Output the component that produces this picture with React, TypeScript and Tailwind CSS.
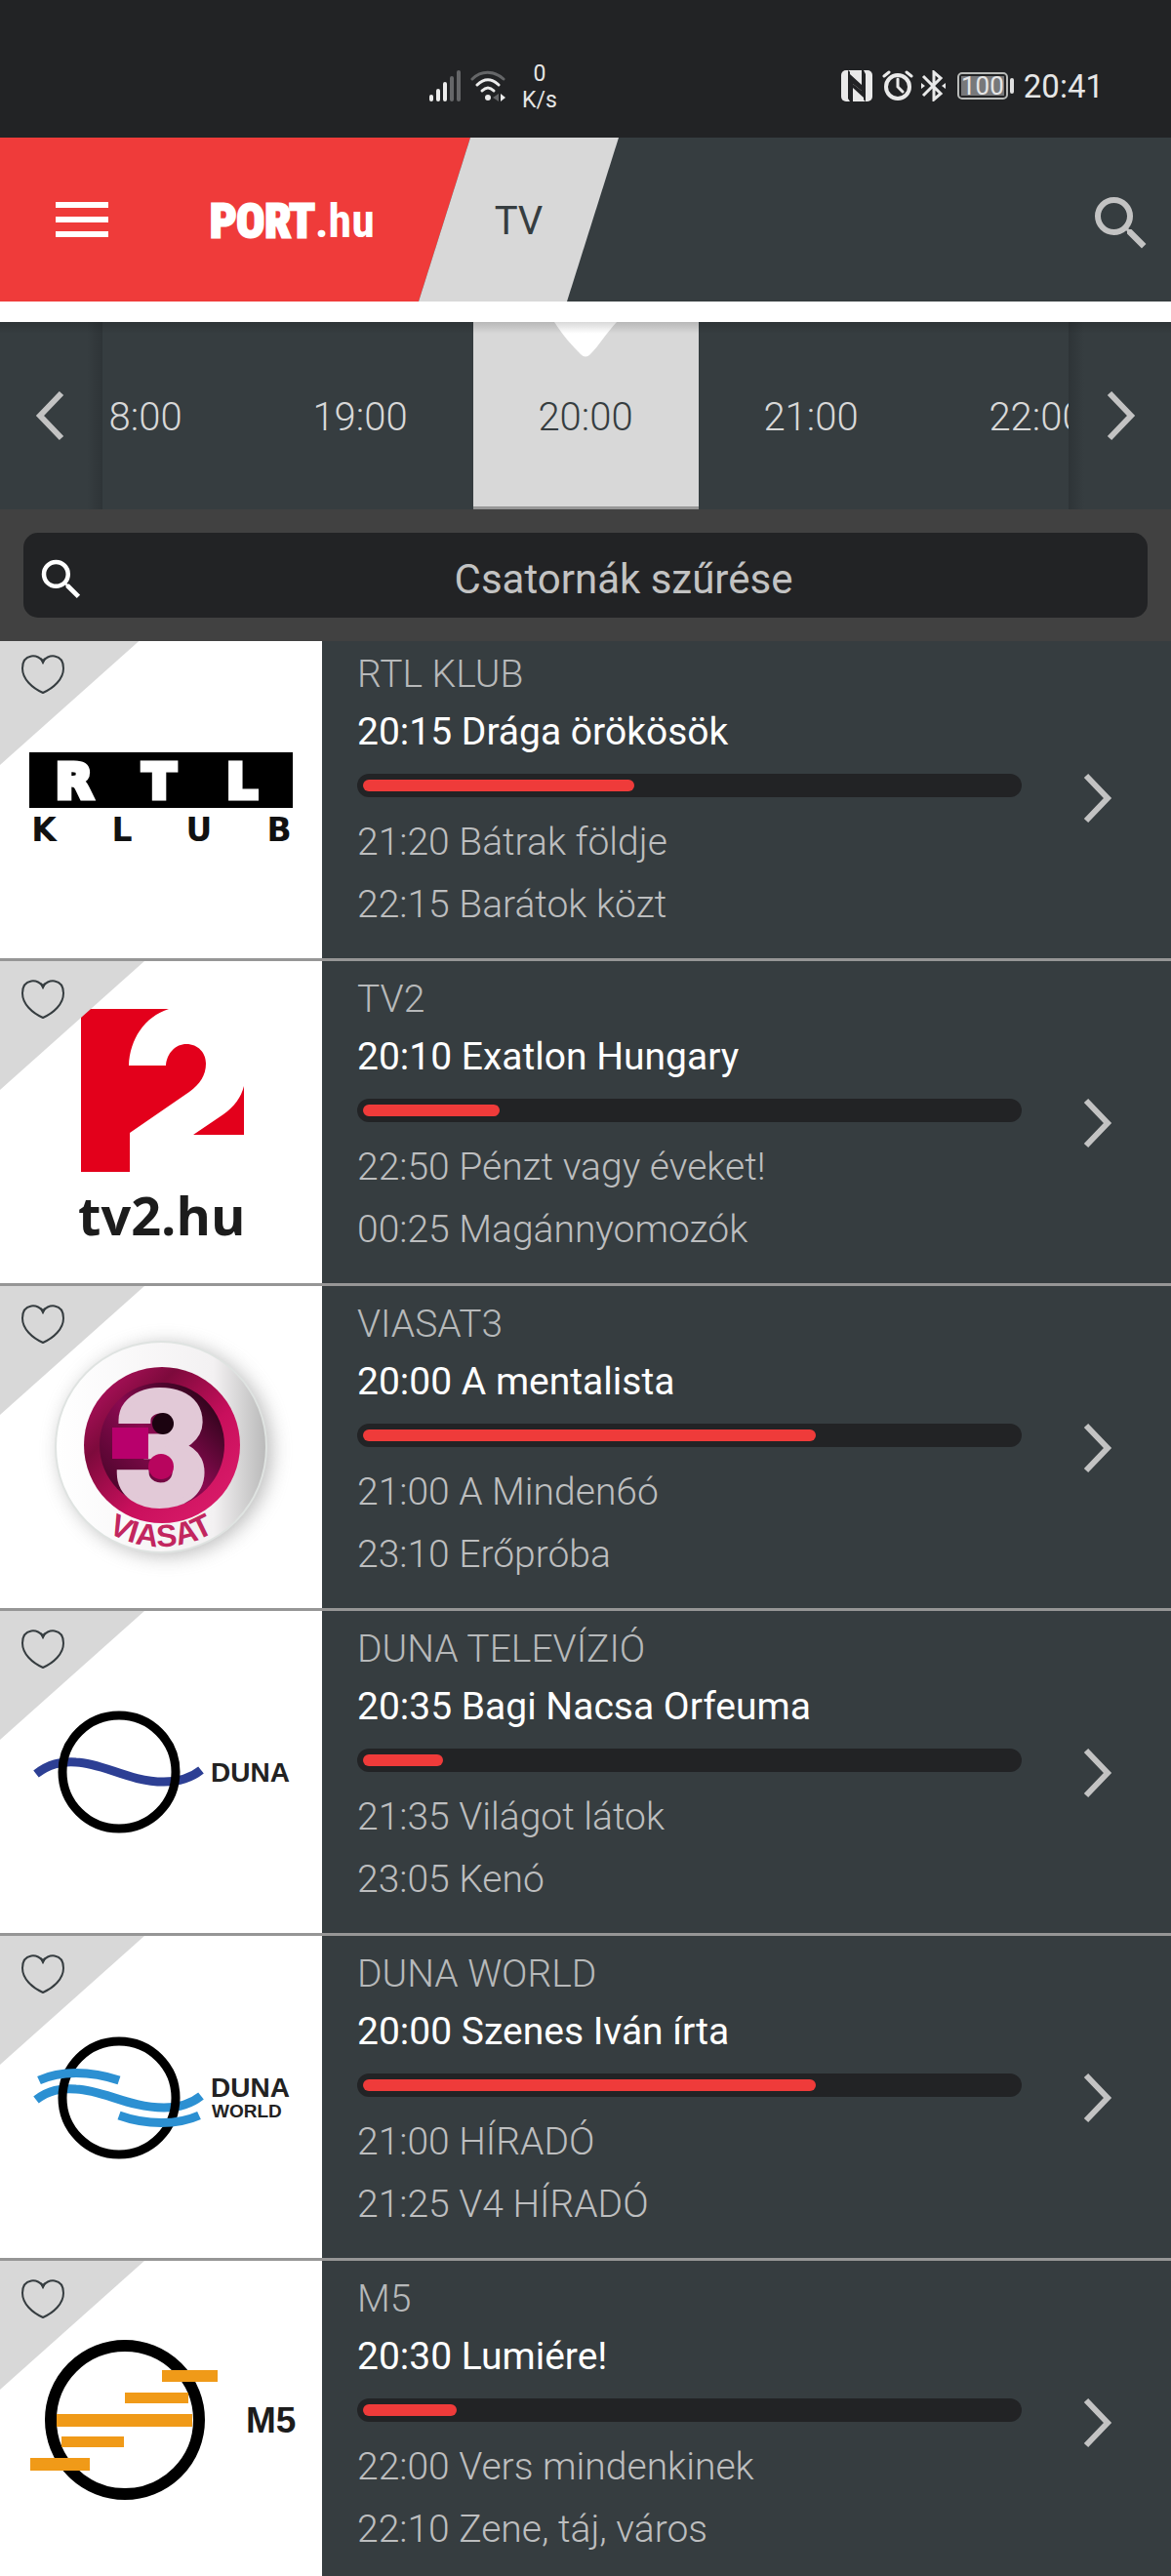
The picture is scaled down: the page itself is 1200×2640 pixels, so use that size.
import type { ReactNode } from "react";
import { MdSearch } from "react-icons/md";

type Channel = {
  name: string;
  now: string;
  progress: number;
  next: string[];
  logo: ReactNode;
};

function RtlLogo() {
  return (
    <svg viewBox="0 0 330 330" className="w-full" role="img" aria-label="RTL Klub">
      <rect x="30" y="119" width="270" height="57" fill="#000" />
      <g fill="#fff" stroke="#fff" strokeWidth="5" fontFamily="DejaVu Sans" fontWeight="700" fontSize="50" textAnchor="middle">
        <text x="76" y="166">R</text>
        <text x="163" y="166">T</text>
        <text x="248" y="166">L</text>
      </g>
      <g fill="#111" fontFamily="DejaVu Sans" fontWeight="700" fontSize="33" textAnchor="middle">
        <text x="45" y="210">K</text>
        <text x="125" y="210">L</text>
        <text x="204" y="210">U</text>
        <text x="286" y="210">B</text>
      </g>
    </svg>
  );
}

function Tv2Logo() {
  return (
    <svg viewBox="0 0 330 330" className="w-full" role="img" aria-label="TV2">
      <g fill="#e3001b">
        <path d="M83 49H173C148 57 133 80 132 107H170C171 94 180 85 191 85C203 85 211 94 211 105C211 117 205 126 194 134L133 176V216H83Z" />
        <path d="M250 128V178H198L229 157C240 149 247 140 250 128Z" />
      </g>
      <text x="80" y="281" fill="#1c1c1c" fontFamily="Open Sans" fontWeight="700" fontSize="54">tv2.hu</text>
    </svg>
  );
}

function ViasatLogo() {
  return (
    <svg viewBox="0 0 330 330" className="w-full" role="img" aria-label="Viasat3">
      <defs>
        <filter id="soft" x="-30%" y="-30%" width="160%" height="160%">
          <feGaussianBlur stdDeviation="10" />
        </filter>
        <linearGradient id="disc" x1="0" y1="0" x2="1" y2="0">
          <stop offset="0" stopColor="#ffffff" />
          <stop offset="0.75" stopColor="#f3f1f2" />
          <stop offset="1" stopColor="#b9b9b9" />
        </linearGradient>
        <linearGradient id="ring" x1="0" y1="0" x2="1" y2="1">
          <stop offset="0" stopColor="#c4146a" />
          <stop offset="0.3" stopColor="#7d0a3c" />
          <stop offset="0.6" stopColor="#c80f5c" />
          <stop offset="1" stopColor="#e0206e" />
        </linearGradient>
        <linearGradient id="well" x1="0" y1="1" x2="1" y2="0">
          <stop offset="0" stopColor="#3a0420" />
          <stop offset="0.5" stopColor="#8a0a50" />
          <stop offset="1" stopColor="#12020a" />
        </linearGradient>
      </defs>
      <circle cx="170" cy="168" r="108" fill="#8c8c8c" opacity="0.6" filter="url(#soft)" />
      <circle cx="165" cy="165" r="108" fill="url(#disc)" stroke="#dfe3e1" strokeWidth="2" />
      <circle cx="166" cy="163" r="80" fill="url(#ring)" />
      <circle cx="166" cy="163" r="64" fill="url(#well)" />
      <text x="166" y="223" fill="#e2c9d7" stroke="#e2c9d7" strokeWidth="6" fontFamily="Roboto" fontWeight="900" fontSize="162" textAnchor="middle">3</text>
      <path d="M115 145H152V177H115Z" fill="#b8006c" />
      <circle cx="165" cy="185" r="13" fill="#b8055e" />
      <circle cx="167" cy="141" r="11" fill="#1b0310" />
      <path id="rim" d="M58 160A107 107 0 0 0 272 160" fill="none" />
      <text fill="#c2265f" fontFamily="Liberation Sans" fontWeight="700" fontSize="32" textAnchor="middle">
        <textPath href="#rim" startOffset="50%">VIASAT</textPath>
      </text>
    </svg>
  );
}

function DunaLogo() {
  return (
    <svg viewBox="0 0 330 330" className="w-full" role="img" aria-label="Duna">
      <path d="M37 167C50 157 62 154 78 155C106 156 132 175 168 175C184 175 196 171 206 163" fill="none" stroke="#2d3f94" strokeWidth="9" />
      <circle cx="122" cy="165" r="58" fill="none" stroke="#000" strokeWidth="9" />
      <text x="216" y="175" fill="#222" fontFamily="Liberation Sans" fontWeight="700" fontSize="28">DUNA</text>
    </svg>
  );
}

function DunaWorldLogo() {
  return (
    <svg viewBox="0 0 330 330" className="w-full" role="img" aria-label="Duna World">
      <path d="M37 168C50 158 62 156 78 157C106 158 132 176 168 176C184 176 196 172 206 164" fill="none" stroke="#2c90d2" strokeWidth="9" />
      <circle cx="122" cy="166" r="58" fill="none" stroke="#000" strokeWidth="9" />
      <g fill="none" stroke="#2c90d2" strokeWidth="9">
        <path d="M40 148C62 138 92 138 122 148" />
        <path d="M122 184C150 194 182 194 204 184" />
      </g>
      <text x="216" y="165" fill="#222" fontFamily="Liberation Sans" fontWeight="700" fontSize="28">DUNA</text>
      <text x="217" y="186" fill="#222" fontFamily="Liberation Sans" fontWeight="700" fontSize="19">WORLD</text>
    </svg>
  );
}

function M5Logo() {
  return (
    <svg viewBox="0 0 330 330" className="w-full" role="img" aria-label="M5">
      <circle cx="128" cy="163" r="76" fill="none" stroke="#000" strokeWidth="12" />
      <g fill="#f09a18">
        <rect x="166" y="112" width="57" height="12" />
        <rect x="128" y="135" width="65" height="11" />
        <rect x="58" y="157" width="139" height="13" />
        <rect x="63" y="180" width="64" height="11" />
        <rect x="31" y="202" width="61" height="13" />
      </g>
      <text x="252" y="176" fill="#1c1c1c" fontFamily="Liberation Sans" fontWeight="700" fontSize="37">M5</text>
    </svg>
  );
}

const channels: Channel[] = [
  { name: "RTL KLUB", now: "20:15 Drága örökösök", progress: 41.6, next: ["21:20 Bátrak földje", "22:15 Barátok közt"], logo: <RtlLogo /> },
  { name: "TV2", now: "20:10 Exatlon Hungary", progress: 20.9, next: ["22:50 Pénzt vagy éveket!", "00:25 Magánnyomozók"], logo: <Tv2Logo /> },
  { name: "VIASAT3", now: "20:00 A mentalista", progress: 69.4, next: ["21:00 A Minden6ó", "23:10 Erőpróba"], logo: <ViasatLogo /> },
  { name: "DUNA TELEVÍZIÓ", now: "20:35 Bagi Nacsa Orfeuma", progress: 12.3, next: ["21:35 Világot látok", "23:05 Kenó"], logo: <DunaLogo /> },
  { name: "DUNA WORLD", now: "20:00 Szenes Iván írta", progress: 69.4, next: ["21:00 HÍRADÓ", "21:25 V4 HÍRADÓ"], logo: <DunaWorldLogo /> },
  { name: "M5", now: "20:30 Lumiére!", progress: 14.4, next: ["22:00 Vers mindenkinek", "22:10 Zene, táj, város"], logo: <M5Logo /> },
];

const times = ["18:00", "19:00", "20:00", "21:00", "22:00"];

function Chevron({ left = false }: { left?: boolean }) {
  return (
    <svg viewBox="0 0 30 52" className="h-[52px] w-[30px]" fill="none" stroke="#c3c3c3" strokeWidth="6" aria-hidden="true">
      <path d={left ? "M27 3L5 26L27 49" : "M3 3L25 26L3 49"} />
    </svg>
  );
}

function StatusBar() {
  return (
    <div className="flex h-[141px] shrink-0 items-center justify-between bg-[#222325] pt-[35px] pr-[69px] pl-[440px] text-[#e6e6e6]">
      <div className="flex items-center">
        <svg viewBox="0 0 33 32" className="mr-2 h-8 w-[33px]" aria-hidden="true">
          <g fill="#ececec">
            <rect x="0" y="25" width="4" height="7" rx="2" />
            <rect x="7" y="19" width="4" height="13" rx="2" />
            <rect x="14" y="12" width="4" height="20" rx="2" />
          </g>
          <g fill="#656668">
            <rect x="21" y="6" width="4" height="26" rx="2" />
            <rect x="28" y="0" width="4" height="32" rx="2" />
          </g>
        </svg>
        <svg viewBox="0 0 38 32" className="mr-4 h-8 w-[38px]" fill="none" strokeLinecap="round" strokeWidth="3" aria-hidden="true">
          <path d="M3 9C12 0 25 0 35 9" stroke="#656668" />
          <path d="M8 15C15 8 23 8 30 15" stroke="#ececec" />
          <path d="M13 21C17 17 21 17 25 21" stroke="#ececec" />
          <circle cx="19" cy="28" r="3" fill="#ececec" />
          <path d="M24 28L30 24V32Z" fill="#656668" />
          <path d="M32 24L37 28L32 32Z" fill="#ececec" />
        </svg>
        <div className="pt-0.5 text-center text-[23px] leading-[27px]">
          <div>0</div>
          <div>K/s</div>
        </div>
      </div>
      <div className="flex items-center">
        <svg viewBox="0 0 32 32" className="mr-2.5 h-8 w-8" aria-hidden="true">
          <rect width="32" height="32" rx="5" fill="#e9e9e9" />
          <path d="M7 0L21 12V21L12 14V32H9L7 29Z" fill="#222325" />
          <path d="M25 32L12 20V14L21 21V0H23L25 4Z" fill="#222325" />
          <path d="M9 0H16L21 6V15L9 4ZM23 32H16L12 27V18L23 28Z" fill="#e9e9e9" />
        </svg>
        <svg viewBox="0 0 32 32" className="mr-2 h-8 w-8" fill="none" stroke="#e9e9e9" strokeWidth="4" aria-hidden="true">
          <circle cx="16" cy="17" r="12" />
          <path d="M16 9V17L21 22M2 6L7 2M30 6L25 2" strokeWidth="3" strokeLinecap="round" />
        </svg>
        <svg viewBox="0 0 25 32" className="mr-3 h-8 w-[25px]" fill="none" stroke="#e9e9e9" strokeWidth="3" aria-hidden="true">
          <path d="M2 6L20 24L13 30V2L20 8L2 26" />
          <path d="M0 13L4 16L0 19ZM25 13L21 16L25 19Z" fill="#e9e9e9" stroke="none" />
        </svg>
        <div className="flex h-7 items-center rounded-[5px] border-2 border-[#b8bab8] p-0.5">
          <span className="bg-[#77787a] text-[26px] leading-5">100</span>
        </div>
        <div className="mr-2.5 ml-0.5 h-4 w-1 rounded-sm bg-[#e0e0e0]" />
        <div className="pt-0.5 text-[33px] leading-10">20:41</div>
      </div>
    </div>
  );
}

function Header() {
  return (
    <header className="flex h-[168px] shrink-0 bg-[#363d40]">
      <div className="flex w-[482px] items-center bg-[#ef3b3a] pl-[57px] [clip-path:polygon(0_0,100%_0,429px_100%,0_100%)]">
        <button aria-label="Menü" className="flex w-[54px] flex-col gap-[9px]">
          <span className="h-1.5 w-full bg-white" />
          <span className="h-1.5 w-full bg-white" />
          <span className="h-1.5 w-full bg-white" />
        </button>
        <a href="#" className="ml-[104px] flex items-baseline pt-1 font-['Liberation_Sans_Narrow','Roboto_Condensed','Roboto'] text-[48px] leading-[60px] font-bold text-white [-webkit-text-stroke:3px_white]">
          PORT<span className="[-webkit-text-stroke:0]">.hu</span>
        </a>
      </div>
      <a href="#" className="-ml-[53px] flex w-[205px] items-center justify-center bg-[#d8d8d8] pt-1 text-[40px] text-[#363d40] [clip-path:polygon(53px_0,100%_0,152px_100%,0_100%)]">
        TV
      </a>
      <button aria-label="Keresés" className="ml-auto pt-2 pr-[15px] text-[#c3c3c3]">
        <MdSearch size={72} />
      </button>
    </header>
  );
}

function TimeStrip() {
  return (
    <nav className="relative flex h-48 shrink-0 bg-[#363d40]">
      <button aria-label="Korábban" className="flex w-[105px] shrink-0 items-center bg-linear-to-r from-[#363d40] from-85% to-[#2e3437] pl-9">
        <Chevron left />
      </button>
      <div className="flex min-w-0 flex-1 justify-center overflow-hidden">
        {times.map((time) =>
          time === "20:00" ? (
            <button key={time} aria-current="true" className="relative w-[231px] shrink-0 bg-[#d8d8d8] pt-1 text-[40px] font-light text-[#363d40] shadow-[inset_0_-3px_0_#969696]">
              <svg viewBox="0 0 64 36" className="absolute top-0 left-1/2 h-9 w-16 -translate-x-1/2" fill="#fff" aria-hidden="true">
                <path d="M0 0H64C52 13 46 24 37 33Q32 38 27 33C18 24 9 14 0 0Z" />
              </svg>
              {time}
            </button>
          ) : (
            <button key={time} className="w-[231px] shrink-0 pt-1 text-[40px] font-light text-[#d8d8d8]">
              {time}
            </button>
          ),
        )}
      </div>
      <button aria-label="Később" className="flex w-[105px] shrink-0 items-center justify-end bg-linear-to-r from-[#2e3437] to-[#363d40] to-15% pr-9">
        <Chevron />
      </button>
      <div className="pointer-events-none absolute inset-x-0 top-0 h-3 bg-linear-to-b from-black/15 to-transparent" />
    </nav>
  );
}

function ChannelFilter() {
  return (
    <div className="relative z-10 shrink-0 bg-[#414141] p-6">
      <label className="flex h-[87px] items-center rounded-[15px] bg-[#222325] pt-2 pl-3 text-white">
        <MdSearch size={54} className="shrink-0" />
        <input
          aria-label="Csatornák szűrése"
          placeholder="Csatornák szűrése"
          className="ml-3 min-w-0 flex-1 bg-transparent text-center text-[42px] outline-none placeholder:text-[#c3c3c3]"
        />
      </label>
    </div>
  );
}

function ChannelRow({ channel }: { channel: Channel }) {
  return (
    <li className="relative flex border-b-[3px] border-[#969696]">
      <div className="w-[330px] shrink-0 bg-white">{channel.logo}</div>
      <button aria-label={`${channel.name} kedvenc`} className="absolute top-0 left-0 h-[132px] w-[148px] bg-[#d8d8d8] [clip-path:polygon(0_0,100%_0,0_100%)]">
        <svg viewBox="0 0 148 132" fill="none" stroke="#363d40" strokeWidth="2" aria-hidden="true">
          <path d="M44 26C40 18 23 17 23 33C23 44 33 53 44 58C55 53 65 44 65 33C65 17 48 18 44 26Z" />
          <path d="M42 23L44 27L46 23" />
        </svg>
      </button>
      <a href="#" className="flex min-w-0 flex-1 items-center bg-[#363d40] pr-[60px] pl-9">
        <div className="h-full min-w-0 flex-1 pt-2.5 text-[39px]">
          <h2 className="leading-[59px] font-light text-[#b7b9ba]">{channel.name}</h2>
          <p className="leading-[59px] text-white">{channel.now}</p>
          <div className="mt-[13px] mb-3.5 h-6 rounded-full bg-[#222325] p-1.5">
            <div className="h-3 rounded-full bg-[#ef3b3a]" style={{ width: `${channel.progress}%` }} />
          </div>
          {channel.next.map((show) => (
            <p key={show} className="leading-[64px] font-light text-[#bdbebf]">{show}</p>
          ))}
        </div>
        <span className="ml-[63px] pt-0.5">
          <Chevron />
        </span>
      </a>
    </li>
  );
}

export default function App() {
  return (
    <div className="flex h-screen flex-col overflow-hidden bg-white font-['Roboto',sans-serif]">
      <StatusBar />
      <Header />
      <main className="mt-[21px] flex min-h-0 flex-1 flex-col">
        <TimeStrip />
        <ChannelFilter />
        <ul className="-mt-[5px] min-h-0 flex-1 overflow-hidden bg-[#363d40]">
          {channels.map((channel) => (
            <ChannelRow key={channel.name} channel={channel} />
          ))}
        </ul>
      </main>
    </div>
  );
}
